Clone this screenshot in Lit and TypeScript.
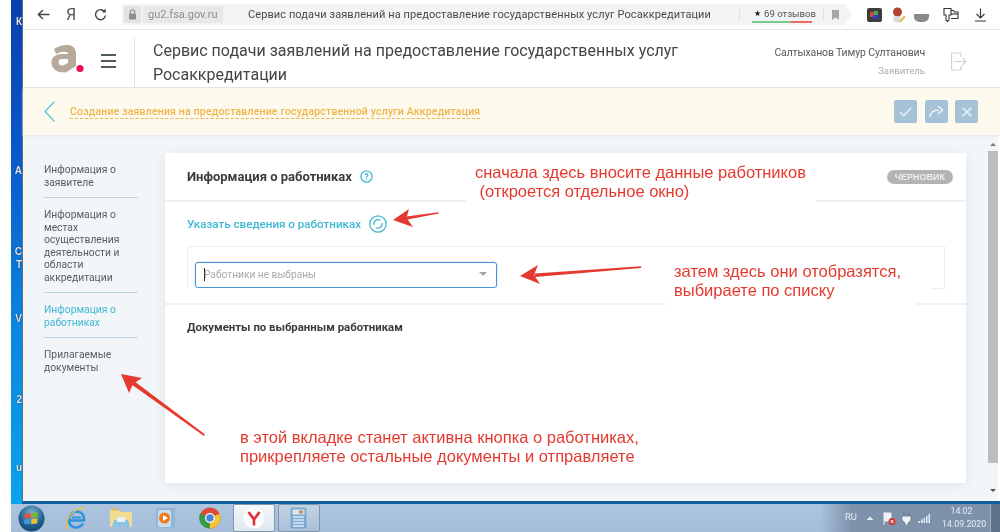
import { LitElement, html, css, svg } from "lit";
import { customElement } from "lit/decorators.js";

const desktopLabels = [
  { t: "К", y: 16 }, { t: "А", y: 165 }, { t: "С", y: 246 }, { t: "Т", y: 259 },
  { t: "V", y: 313 }, { t: "2", y: 394 }, { t: "u", y: 462 },
];
const nav = [
  { t: ["Информация о", "заявителе"], on: false },
  { t: ["Информация о", "местах", "осуществления", "деятельности и", "области", "аккредитации"], on: false },
  { t: ["Информация о", "работниках"], on: true },
  { t: ["Прилагаемые", "документы"], on: false },
];

@customElement("app-root")
export class AppRoot extends LitElement {
  static styles = css`
    :host { display: block; position: relative; width: 1000px; height: 532px; overflow: hidden; font-family: Roboto, "Noto Sans", sans-serif; background: #fff; }
    .shot { height: 532px; display: flex; flex-direction: column; filter: blur(0.3px); }
    .upper { flex: 1; min-height: 0; display: flex; }
    .gap { width: 11px; background: #fff; flex: none; }
    .desk { width: 11px; flex: none; position: relative; overflow: hidden; background: linear-gradient(180deg, #0a3fae 0%, #0b58c8 30%, #0a86de 65%, #09a3ee 100%); }
    .desk span { position: absolute; right: 0; font: 700 10px "Liberation Sans", sans-serif; color: #dfe7f3; text-shadow: 0 0 1px #000; }
    .browser { flex: 1; min-width: 0; display: flex; flex-direction: column; background: #fff; border-bottom: 3px solid #0f5f9c; box-sizing: border-box; border-left: 1px solid #5b7183; }

    .toolbar { height: 29px; flex: none; display: flex; align-items: center; border-bottom: 1px solid #e4e6e8; padding-left: 9px; }
    .tb-ico { width: 22px; height: 22px; display: flex; align-items: center; justify-content: center; color: #444; flex: none; }
    .ya { font: 400 16px Roboto, sans-serif; color: #555; margin-left: 6px; }
    .reload { margin-left: 7px; }
    .addr { margin-left: 11px; width: 723px; height: 21px; flex: none; background: #f1f3f4; display: flex; align-items: center; position: relative; padding-left: 2px; box-sizing: border-box; }
    .addr::after { content: ""; position: absolute; right: -7px; top: 0; border-left: 7px solid #f1f3f4; border-top: 10.5px solid transparent; border-bottom: 10.5px solid transparent; }
    .lock { width: 17px; height: 17px; background: #e1e3e5; border-radius: 2px; display: flex; align-items: center; justify-content: center; flex: none; }
    .domain { width: 80px; height: 17px; flex: none; margin-left: 2px; padding-left: 5px; box-sizing: border-box; background: #e6e8ea; border-radius: 2px; font-size: 11px; line-height: 17px; color: #8d8d8d; }
    .page-title { margin-left: 25px; width: 491px; flex: none; font-size: 11px; color: #4a4a4a; letter-spacing: 0.09px; white-space: nowrap; }
    .sep { width: 1px; height: 12px; background: #dcdee0; flex: none; }
    .sep.after { margin-left: 11px; }
    .rating { margin-left: 12px; width: 60px; height: 16px; flex: none; box-sizing: border-box; padding-left: 2px; font-size: 9.6px; line-height: 14px; color: #555; position: relative; white-space: nowrap; display: flex; gap: 3px; }
    .rating i { font-style: normal; color: #111; font-size: 7.5px; }
    .rating .bar { position: absolute; left: 0; right: 0; bottom: 0; height: 2px; display: flex; }
    .rating .g { width: 39px; background: #7cc88f; }
    .rating .r { flex: 1; background: #ee6a5e; }
    .mark { margin-left: 8px; display: flex; }
    .ext { margin-left: 22px; display: flex; align-items: center; }
    .ext svg { display: block; flex: none; }
    .e2 { margin-left: 9px; }
    .e3 { margin: 5px 0 0 8px; }
    .e4 { margin-left: 14px; }
    .e5 { margin-left: 16px; }

    .head { height: 58px; flex: none; display: flex; border-bottom: 1px solid #e2e4e6; box-sizing: border-box; }
    .logo-zone { width: 111px; flex: none; display: flex; align-items: center; padding: 0 0 0 28px; box-sizing: border-box; gap: 17px; height: 57px; }
    .burger { width: 15px; display: flex; flex-direction: column; gap: 4px; margin-top: 4px; }
    .burger b { display: block; height: 2px; background: #4f5b60; }
    .head-title { margin-top: 7px; padding: 2px 0 0 18px; border-left: 1px solid #e2e4e6; width: 560px; height: 48px; font-size: 16px; line-height: 24px; color: #454545; }
    .user { margin-left: auto; text-align: right; padding-top: 16px; }
    .user .n { font-size: 10.5px; line-height: 14px; color: #5a5a5a; letter-spacing: -0.14px; white-space: nowrap; }
    .user .r { font-size: 9.5px; line-height: 12px; margin-top: 5px; color: #adadad; }
    .logout { margin: 22px 33px 0 25px; }

    .notice { height: 47px; flex: none; background: #fdf9ec; display: flex; align-items: center; padding-left: 21px; box-shadow: 0 1px 2px #e4e6e8; position: relative; z-index: 1; }
    .crumb { margin-left: 15px; font-size: 10.5px; font-weight: 500; color: #efb54c; border-bottom: 1px dashed #efb54c; line-height: 12px; letter-spacing: 0.18px; margin-top: 1px; white-space: nowrap; }
    .btns { margin-left: auto; margin-right: 22px; display: flex; gap: 7.5px; }
    .btn { width: 23px; height: 23px; border-radius: 2px; background: #a5c2d7; display: flex; align-items: center; justify-content: center; }

    .main { flex: 1; min-height: 0; display: flex; background: #f3f6f9; }
    .side { width: 94px; flex: none; margin-left: 21px; padding-top: 29px; box-sizing: border-box; }
    .nav-item { font-size: 10.3px; line-height: 12.5px; color: #5b5b5b; padding: 0 0 8px; margin-bottom: 11px; border-bottom: 1px solid #bcd6e6; }
    .nav-item:last-child { border-bottom: none; }
    .nav-item.on { color: #3fb8d2; }
    .nav-item div { white-space: nowrap; }
    .card { margin: 18px 0 0 27px; width: 801px; height: 330px; flex: none; background: #fff; box-shadow: 0 2px 10px rgba(120,140,160,.16); }
    .card-head { height: 47px; display: flex; align-items: center; padding: 0 13px 0 22px; border-bottom: 2px solid #eff1f3; }
    .card-title { font-size: 13px; font-weight: 700; color: #3c3c3c; white-space: nowrap; }
    .help { margin-left: 8px; display: flex; }
    .badge { margin-left: auto; height: 14px; padding: 0 8px; border-radius: 7px; background: #b4b4b4; color: #eee; font: 700 9px/14px "Liberation Sans", sans-serif; }
    .workers { height: 101px; padding: 0 21px 0 22px; border-bottom: 2px solid #eff1f3; }
    .link-row { height: 44px; display: flex; align-items: center; gap: 8px; color: #3fb8d2; font-size: 11.6px; font-weight: 500; white-space: nowrap; }
    .box { height: 43px; border: 1px solid #eeeeee; padding: 15px 0 0 7px; box-sizing: border-box; }
    .select { width: 302px; height: 26px; border: 1px solid #4a90da; border-radius: 3px; box-sizing: border-box; display: flex; align-items: center; padding-left: 8px; padding-bottom: 2px; font-size: 10.2px; color: #a9a9a9; position: relative; box-shadow: 0 0 2px #9cc4ea; }
    .caret { width: 1px; height: 13px; background: #222; margin-right: -1px; }
    .tri { margin-left: auto; margin-right: 9px; border-top: 4px solid #a5a5a5; border-left: 4px solid transparent; border-right: 4px solid transparent; }
    .docs { padding: 15px 0 0 22px; font-size: 11.4px; font-weight: 700; color: #3c3c3c; white-space: nowrap; }

    .scroll { width: 12px; margin-left: auto; flex: none; display: flex; flex-direction: column; align-items: center; background: #f3f6f9; border-right: 2px solid #fff; box-sizing: border-box; }
    .thumb { height: 312px; width: 10px; background: #bdbdbd; margin-top: 5px; }
    .sa { width: 0; height: 0; border-left: 3px solid transparent; border-right: 3px solid transparent; }
    .up { border-bottom: 3px solid #777; margin-top: 8px; }
    .dn { border-top: 3px solid #555; margin-top: auto; margin-bottom: 9px; }

    .taskbar { height: 28px; flex: none; display: flex; align-items: center; margin-left: 11px; background: linear-gradient(180deg, #acc4dd, #a5bdd9); position: relative; }
    .orb { margin-left: 7px; width: 27px; height: 27px; display: flex; flex: none; }
    .tk { width: 42px; height: 28px; margin-left: 2.5px; display: flex; align-items: center; justify-content: center; box-sizing: border-box; flex: none; }
    .tk.first { margin-left: 10px; }
    .tk.act { background: linear-gradient(180deg, #f3f6f9, #dfe7ef); border: 1px solid #8297ac; border-radius: 2px; }
    .tk.run { background: linear-gradient(180deg, #c3d3e4, #a9c0da); border: 1px solid #7e95ac; border-radius: 2px; }
    .tray { margin-left: auto; height: 28px; width: 180px; display: flex; align-items: center; background: linear-gradient(90deg, rgba(125,146,170,0), #7d92aa 18%, #7d92aa); font-size: 9.5px; color: #e6ecf3; box-sizing: border-box; padding-left: 25px; }
    .tray svg { display: block; flex: none; }
    .t1 { margin-left: 9px; }
    .t2 { margin-left: 9px; }
    .t3 { margin-left: 5px; }
    .t4 { margin-left: 6px; }
    .ru { width: 12px; flex: none; margin-bottom: 4px; white-space: nowrap; }
    .clock { margin-left: 12px; text-align: center; line-height: 13px; font-size: 8.8px; width: 39px; flex: none; white-space: nowrap; }
    .show { margin-left: auto; width: 10px; height: 28px; flex: none; background: #5f7488; border-left: 1px solid #9eb0c4; box-sizing: border-box; }

    .wipe { position: absolute; background: #fff; }
    .w1 { left: 466px; top: 159px; width: 350px; height: 44px; }
    .w2 { left: 186px; top: 288px; width: 746px; height: 15px; }
    .w3 { left: 665px; top: 262px; width: 251px; height: 44px; }
    .note { position: absolute; font: 400 16.5px/19px "Liberation Sans", sans-serif; color: #e5392f; white-space: pre; }
    .n1 { left: 475px; top: 163px; }
    .n2 { left: 674px; top: 262px; }
    .n3 { left: 240px; top: 428px; }
    .arrows { position: absolute; left: 0; top: 0; width: 1000px; height: 532px; pointer-events: none; }
  `;

  render() {
    return html`
      <div class="shot">
        <div class="upper">
          <div class="gap"></div>
          <div class="desk">${desktopLabels.map((l) => html`<span style="top:${l.y}px">${l.t}</span>`)}</div>
          <div class="browser">
            ${this.toolbar()}
            <div class="head">
              <div class="logo-zone">
                <svg width="33" height="29" viewBox="0 0 33 29">
                  <path d="M3 5C9 1 17 0 21 2C24 3.5 25 7 25 10L25 22L15 28.5L8 28C2 26 0 21 .5 17C1.5 12 6 10 11 10L17 10C17 8 14 7.5 10 8L5 10ZM17 15L11 15C8.5 15 7.5 16.5 7.5 18C7.5 20 9.5 22 12 21.5L17 19Z" fill="#b8aa9b" fill-rule="evenodd"/>
                  <circle cx="29" cy="24.5" r="3.6" fill="#e8124f"/>
                </svg>
                <div class="burger"><b></b><b></b><b></b></div>
              </div>
              <div class="head-title">Сервис подачи заявлений на предоставление государственных услуг Росаккредитации</div>
              <div class="user">
                <div class="n">Салтыханов Тимур Султанович</div>
                <div class="r">Заявитель</div>
              </div>
              <svg class="logout" width="17" height="19" viewBox="0 0 17 19" fill="none" stroke="#cfd2d4" stroke-width="1.2">
                <path d="M11 1H1.6V18H11M11 1V5M11 18V14M4.5 9.5H16M12.5 6L16 9.5L12.5 13"/>
              </svg>
            </div>
            <div class="notice">
              <svg width="11" height="21" viewBox="0 0 11 21" fill="none" stroke="#5cc6da" stroke-width="1.3"><path d="M10.5 .5L1 10.5L10.5 20.5"/></svg>
              <span class="crumb">Создание заявления на предоставление государственной услуги Аккредитация</span>
              <div class="btns">
                <div class="btn"><svg width="13" height="10" viewBox="0 0 13 10" fill="none" stroke="#eef4f8" stroke-width="1.4"><path d="M1 5L4.7 8.7L12 1"/></svg></div>
                <div class="btn"><svg width="15" height="13" viewBox="0 0 15 13" fill="none" stroke="#eef4f8" stroke-width="1.5"><path d="M1 12C1.5 7.5 4.5 5 9.5 5M9 1L13.5 5L9 9"/></svg></div>
                <div class="btn"><svg width="10" height="10" viewBox="0 0 10 10" stroke="#eef4f8" stroke-width="1.4"><path d="M.7 .7L9.3 9.3M9.3 .7L.7 9.3"/></svg></div>
              </div>
            </div>
            <div class="main">
              <div class="side">
                ${nav.map((n) => html`<div class="nav-item ${n.on ? "on" : ""}">${n.t.map((l) => html`<div>${l}</div>`)}</div>`)}
              </div>
              <div class="card">
                <div class="card-head">
                  <span class="card-title">Информация о работниках</span>
                  <span class="help"><svg width="13" height="13" viewBox="0 0 13 13" fill="none"><circle cx="6.5" cy="6.5" r="5.6" stroke="#47bcd4" stroke-width="1.4"/><text x="6.5" y="9.6" font-size="8.5" font-weight="700" text-anchor="middle" fill="#47bcd4" font-family="Roboto">?</text></svg></span>
                  <span class="badge">ЧЕРНОВИК</span>
                </div>
                <div class="workers">
                  <div class="link-row">
                    <span>Указать сведения о работниках</span>
                    <svg width="18" height="18" viewBox="0 0 18 18" fill="none" stroke="#3fb4cf"><circle cx="9" cy="9" r="8.2" stroke-width="1.2"/><path d="M5 10A4.2 4.2 0 0 1 11.4 5.5M13 8A4.2 4.2 0 0 1 6.8 12.6" stroke-width="1.2"/></svg>
                  </div>
                  <div class="box">
                    <div class="select"><span class="caret"></span>Работники не выбраны<span class="tri"></span></div>
                  </div>
                </div>
                <div class="docs">Документы по выбранным работникам</div>
              </div>
              <div class="scroll"><span class="sa up"></span><div class="thumb"></div><span class="sa dn"></span></div>
            </div>
          </div>
        </div>
        ${this.taskbar()}
        <div class="wipe w1"></div><div class="wipe w2"></div><div class="wipe w3"></div>
        <div class="note n1">сначала здесь вносите данные работников
 (откроется отдельное окно)</div>
        <div class="note n2">затем здесь они отобразятся,
выбираете по списку</div>
        <div class="note n3">в этой вкладке станет активна кнопка о работниках,
прикрепляете остальные документы и отправляете</div>
        ${this.arrows()}
      </div>
    `;
  }

  toolbar() {
    return html`<div class="toolbar">
      <span class="tb-ico"><svg width="13" height="11" viewBox="0 0 13 11" fill="none" stroke="#444" stroke-width="1.4"><path d="M12.5 5.5H1.5M6 1L1.3 5.5L6 10"/></svg></span>
      <span class="tb-ico ya">Я</span>
      <span class="tb-ico reload"><svg width="13" height="13" viewBox="0 0 13 13" fill="none" stroke="#444" stroke-width="1.4"><path d="M10.8 4A5 5 0 1 0 11.5 7.5"/><path d="M7.8 4.4H11.8V.4Z" fill="#444" stroke="none"/></svg></span>
      <div class="addr">
        <span class="lock"><svg width="9" height="11" viewBox="0 0 9 11"><path d="M2.3 4.5V3a2.2 2.2 0 0 1 4.4 0V4.5" fill="none" stroke="#8d8d8d" stroke-width="1.1"/><rect x="1" y="4.5" width="7" height="6" rx=".7" fill="#8d8d8d"/></svg></span>
        <span class="domain">gu2.fsa.gov.ru</span>
        <span class="page-title">Сервис подачи заявлений на предоставление государственных услуг Росаккредитации</span>
        <span class="sep"></span>
        <span class="rating"><i>★</i><span>69 отзывов</span><span class="bar"><span class="g"></span><span class="r"></span></span></span>
        <span class="sep after"></span>
        <span class="mark"><svg width="7" height="10" viewBox="0 0 7 10"><path d="M0 0H7V10L3.5 7.5L0 10Z" fill="#a7a7a7"/></svg></span>
      </div>
      <div class="ext">
        <svg width="15" height="14" viewBox="0 0 15 14"><rect width="15" height="14" rx="2" fill="#3d3d3d"/><rect x="3" y="4" width="4" height="5" fill="#d34b3c"/><rect x="7" y="3" width="4" height="4" fill="#45a84a"/><rect x="6" y="7" width="5" height="4" fill="#2a3fd0"/></svg>
        <svg class="e2" width="15" height="16" viewBox="0 0 15 16"><circle cx="6.5" cy="5" r="4.5" fill="#b2432f"/><path d="M2 9.5H10L9 15H3Z" fill="#d9d9e0"/><path d="M8 15L13 8.5L14.5 10L9.5 15.5Z" fill="#e3b43c"/></svg>
        <svg class="e3" width="15" height="10" viewBox="0 0 15 10"><path d="M0 2H15V5C15 8 12 10 7.5 10C3 10 0 8 0 5Z" fill="#8a8a8a"/></svg>
        <svg class="e4" width="16" height="16" viewBox="0 0 16 16" fill="none" stroke="#333" stroke-width="1.1"><path d="M1 1.5H8V8H6V13L4.5 14.5L3 13V8H1Z"/><path d="M8 3.5H10.5L11.5 5H15V11.5H8"/><path d="M8 7H15"/></svg>
        <svg class="e5" width="11" height="14" viewBox="0 0 11 14" fill="none" stroke="#333" stroke-width="1.1"><path d="M5.5 .5V9.5M1.5 6L5.5 10L9.5 6M0 13H11"/></svg>
      </div>
    </div>`;
  }

  taskbar() {
    return html`<div class="taskbar">
      <span class="orb"><svg width="27" height="27" viewBox="0 0 27 27">
        <defs><radialGradient id="o" cx=".5" cy=".3" r=".8"><stop offset="0" stop-color="#7fb2d3"/><stop offset=".6" stop-color="#1d5f8e"/><stop offset="1" stop-color="#123e60"/></radialGradient></defs>
        <circle cx="13.5" cy="13.5" r="13" fill="url(#o)"/>
        <path d="M7 9L13 8L12.5 13L6.5 13.5Z" fill="#e6532f"/><path d="M14 8L20 7L19.5 12.5L13.5 13Z" fill="#78b83a"/><path d="M6.5 14.5L12.5 14L12 19L6 19Z" fill="#3b9ad9"/><path d="M13.5 14L19.5 13.5L19 18.5L13 19Z" fill="#f0c030"/>
      </svg></span>
      <span class="tk first"><svg width="24" height="25" viewBox="0 0 24 24" fill="none"><path d="M5 14H20C20.5 8 17 5 13 5C8.5 5 5 9 5 14C5 19 9 21.5 13 21C16 20.7 18 19 19 17" stroke="#2c95dc" stroke-width="2.6"/><path d="M8 11H17" stroke="#2c95dc" stroke-width="2"/><path d="M20 2C16 0 8 5 3.5 13C2 17 2 22 5 23" stroke="#f0c23c" stroke-width="1.4"/></svg></span>
      <span class="tk"><svg width="24" height="22" viewBox="0 0 24 22"><path d="M1 3H10L12 5H23V20H1Z" fill="#f2dc94"/><rect x="3" y="1.5" width="6" height="2" fill="#d9b95a"/><path d="M5 13H19L21 20H3Z" fill="#8cc2e2"/><rect x="8" y="10" width="8" height="5" fill="#e6f0f6"/></svg></span>
      <span class="tk"><svg width="21" height="22" viewBox="0 0 21 22"><rect x="1" y="1" width="19" height="20" fill="#8fb6d6"/><rect x="3" y="3" width="13" height="17" rx="2" fill="#c8ddec"/><circle cx="9.5" cy="11" r="5.5" fill="#ef7a1e"/><path d="M8 8L13 11L8 14Z" fill="#fff"/></svg></span>
      <span class="tk"><svg width="22" height="22" viewBox="0 0 23 23"><circle cx="11.5" cy="11.5" r="11" fill="#de4a3a"/><path d="M11.5 11.5L21.4 7A11 11 0 0 1 11 22.5Z" fill="#f4c52e"/><path d="M11.5 11.5L11 22.5A11 11 0 0 1 1.5 6.5Z" fill="#2f9e4c"/><circle cx="11.5" cy="11.5" r="5.2" fill="#fff"/><circle cx="11.5" cy="11.5" r="3.9" fill="#4a86d8"/></svg></span>
      <span class="tk act"><svg width="22" height="22" viewBox="0 0 22 22"><circle cx="11" cy="11" r="10.5" fill="#fbfbfb"/><path d="M5.5 5L11 12.5V18.5M16.5 5L11 12.5" fill="none" stroke="#e0303a" stroke-width="2.6"/></svg></span>
      <span class="tk run"><svg width="17" height="22" viewBox="0 0 17 22"><rect x=".5" y=".5" width="16" height="21" rx="1.5" fill="#7aa9cf"/><rect x="2.5" y="2.5" width="12" height="5" fill="#d7e8f4"/><rect x="9" y="3.5" width="4" height="3" fill="#c68e5a"/><path d="M3 10H14M3 13H14M3 16H14M3 19H14" stroke="#dcebf6" stroke-width="1.6"/></svg></span>
      <div class="tray">
        <span class="ru">RU</span>
        <svg class="t1" width="8" height="5" viewBox="0 0 8 5"><path d="M4 0.5L7.5 4H.5Z" fill="#e6ecf3"/></svg>
        <svg class="t2" width="13" height="13" viewBox="0 0 13 13"><path d="M1 0V13M1 1H8V9H1" fill="#eef2f6" stroke="#e8edf3"/><circle cx="9" cy="9.5" r="3.5" fill="#d7352c"/><path d="M7.6 8L10.4 11M10.4 8L7.6 11" stroke="#fff"/></svg>
        <svg class="t3" width="11" height="13" viewBox="0 0 11 13"><path d="M3 0V4M8 0V4M1 4H10V8L7 11V13H4V11L1 8Z" fill="#eef2f6" stroke="#56667a" stroke-width=".6"/></svg>
        <svg class="t4" width="12" height="10" viewBox="0 0 12 10"><path d="M.5 8H2V10H.5ZM3 6.5H4.5V10H3ZM5.5 5H7V10H5.5ZM8 3H9.5V10H8ZM10.5 1H12V10H10.5Z" fill="#e8edf3"/></svg>
        <div class="clock"><div>14:02</div><div>14.09.2020</div></div>
        <span class="show"></span>
      </div>
    </div>`;
  }

  arrows() {
    return svg`<svg class="arrows" viewBox="0 0 1000 532">
      <g fill="#e53a30">
        <path d="M438.5 212.2L438.8 213.6L405 220L404 216.8Z"/>
        <path d="M393 220L409 209L406.5 218L413 227Z"/>
        <path d="M641 266.2L641.2 268L535 277L534.5 273.4Z"/>
        <path d="M520 276L538 265L534 275L540 284Z"/>
        <path d="M204.8 434.2L204 436L129.5 383L132 379.5Z"/>
        <path d="M121 374L142 378L133 384L129 393Z"/>
      </g>
    </svg>`;
  }
}
